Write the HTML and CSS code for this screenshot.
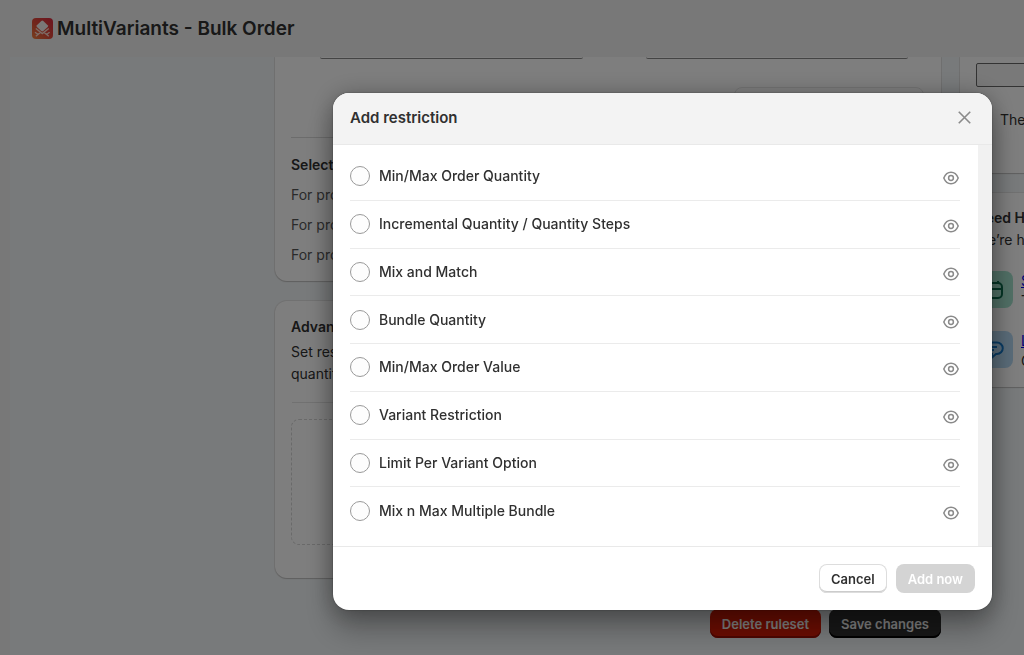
FILE: index.html
```html
<!DOCTYPE html>
<html lang="en">
<head>
<meta charset="utf-8">
<meta name="viewport" content="width=device-width, initial-scale=1">
<title>MultiVariants - Bulk Order</title>
<link rel="stylesheet" href="styles.css">
</head>
<body>
<svg class="sprite" aria-hidden="true">
  <symbol id="eye" viewBox="0 0 16 16">
    <path d="M.8 8C2.300 4.300 4.800 2.300 8 2.300s5.700 2 7.200 5.700c-1.500 3.700-4 5.700-7.200 5.700S2.300 11.700.8 8z"/>
    <circle cx="8" cy="8" r="2.400"/>
  </symbol>
</svg>
<div class="app">
  <header class="topbar">
    <svg class="logo" viewBox="0 0 21 21" aria-hidden="true">
      <defs>
        <linearGradient id="logo-fill" x1="1" y1="0" x2="0" y2="1">
          <stop offset="0" stop-color="#d82840"/>
          <stop offset=".55" stop-color="#e24c38"/>
          <stop offset="1" stop-color="#f0803c"/>
        </linearGradient>
      </defs>
      <rect width="21" height="21" rx="4" fill="url(#logo-fill)"/>
      <path d="M9.300 3q1-.8 2 0l4.400 4.200q.8.9 0 1.800l-4.400 4q-1 .8-2 0L4.900 9q-.8-.9 0-1.800z" fill="#f4f0ee"/>
      <path d="M3.800 10.500l6.500 5 6.500-5M8.500 14.500l-4.700 3.800M12.100 14.500l4.700 3.800M3 14.300l3.500 2.500M17.600 14.300l-3.500 2.500" fill="none" stroke="#fbd6c8" stroke-width="1.400"/>
    </svg>
    <h1 class="app-name">MultiVariants - Bulk Order</h1>
  </header>
  <main class="content">
    <div class="primary">
      <section class="card card-cut">
        <div class="fields"><div class="field-end"></div><div class="field-end"></div></div>
        <div class="preview-box"></div>
        <div class="selection">
          <h2 class="card-title">Selection</h2>
          <p class="muted">For products</p>
          <p class="muted">For products</p>
          <p class="muted">For products</p>
        </div>
      </section>
      <section class="card card-rules">
        <h2 class="card-title">Advanced</h2>
        <p class="card-text">Set restrictions<br>quantity</p>
        <div class="drop-zone"></div>
      </section>
      <div class="page-actions">
        <button class="btn btn-danger" type="button">Delete ruleset</button>
        <button class="btn btn-dark" type="button">Save changes</button>
      </div>
    </div>
    <aside class="secondary">
      <section class="card card-cut card-status">
        <input class="status-input" type="text" aria-label="Status">
        <p class="status-text">The</p>
      </section>
      <section class="card card-help">
        <h2 class="card-title">Need H</h2>
        <p class="card-text">We’re h</p>
        <div class="help-row">
          <span class="tile tile-green"><svg viewBox="0 0 20 20" aria-hidden="true"><rect x="2" y="3" width="16" height="15" rx="4"/><path d="M2 9h16M6 1v2M14 1v2"/></svg></span>
          <div><a href="#">S</a><p>T</p></div>
        </div>
        <div class="help-row">
          <span class="tile tile-blue"><svg viewBox="0 0 20 20" aria-hidden="true"><path d="M6 2.500h7a5 5 0 0 1 0 11.500h-1l-4 3.500V14H6a5 5 0 0 1 0-11.500zM6 7h7M6 10h4"/></svg></span>
          <div><a href="#">L</a><p>G</p></div>
        </div>
      </section>
    </aside>
  </main>
</div>

<div class="backdrop">
  <div class="modal" role="dialog" aria-modal="true" aria-labelledby="modal-title">
    <header class="modal-head">
      <h2 class="modal-title" id="modal-title">Add restriction</h2>
      <button class="icon-btn" type="button" aria-label="Close"><svg class="close" viewBox="0 0 12 12" aria-hidden="true"><path d="M.7.7l10.600 10.600M11.300.7L.7 11.300"/></svg></button>
    </header>
    <div class="modal-body">
      <ul class="options">
        <li class="option"><label class="choice"><input type="radio" name="restriction">Min/Max Order Quantity</label><button class="icon-btn" type="button" aria-label="Preview Min/Max Order Quantity"><svg class="eye"><use href="#eye"/></svg></button></li>
        <li class="option"><label class="choice"><input type="radio" name="restriction">Incremental Quantity / Quantity Steps</label><button class="icon-btn" type="button" aria-label="Preview Incremental Quantity"><svg class="eye"><use href="#eye"/></svg></button></li>
        <li class="option"><label class="choice"><input type="radio" name="restriction">Mix and Match</label><button class="icon-btn" type="button" aria-label="Preview Mix and Match"><svg class="eye"><use href="#eye"/></svg></button></li>
        <li class="option"><label class="choice"><input type="radio" name="restriction">Bundle Quantity</label><button class="icon-btn" type="button" aria-label="Preview Bundle Quantity"><svg class="eye"><use href="#eye"/></svg></button></li>
        <li class="option"><label class="choice"><input type="radio" name="restriction">Min/Max Order Value</label><button class="icon-btn" type="button" aria-label="Preview Min/Max Order Value"><svg class="eye"><use href="#eye"/></svg></button></li>
        <li class="option"><label class="choice"><input type="radio" name="restriction">Variant Restriction</label><button class="icon-btn" type="button" aria-label="Preview Variant Restriction"><svg class="eye"><use href="#eye"/></svg></button></li>
        <li class="option"><label class="choice"><input type="radio" name="restriction">Limit Per Variant Option</label><button class="icon-btn" type="button" aria-label="Preview Limit Per Variant Option"><svg class="eye"><use href="#eye"/></svg></button></li>
        <li class="option"><label class="choice"><input type="radio" name="restriction">Mix n Max Multiple Bundle</label><button class="icon-btn" type="button" aria-label="Preview Mix n Max Multiple Bundle"><svg class="eye"><use href="#eye"/></svg></button></li>
      </ul>
      <div class="scroll-track"></div>
    </div>
    <footer class="modal-foot">
      <button class="btn btn-plain" type="button">Cancel</button>
      <button class="btn btn-primary" type="button" disabled>Add now</button>
    </footer>
  </div>
</div>
</body>
</html>
```
FILE: styles.css
```css
* { box-sizing: border-box; }
body {
  margin: 0;
  font-family: Inter, "Liberation Sans", sans-serif;
  font-size: 14px;
  line-height: 20px;
  color: #303030;
  background: #f0f0f0;
}
h1, h2, p, ul { margin: 0; padding: 0; }
button, input { font: inherit; }
.sprite { display: none; }

.app {
  height: 100vh;
  padding-left: 10px;
  display: flex;
  flex-direction: column;
  overflow: hidden;
}
.topbar {
  flex: none;
  display: flex;
  align-items: center;
  gap: 4px;
  height: 57px;
  padding: 0 22px;
}
.logo { width: 21px; height: 21px; }
.app-name { font-size: 19px; font-weight: 600; line-height: 24px; }

.content {
  flex: 1;
  min-height: 0;
  display: grid;
  grid-template-columns: 666px 320px;
  gap: 19px;
  padding-left: 265px;
  background: #f0f4f6;
  overflow: hidden;
}
.card {
  border-radius: 12px;
  background: #fdfdfd;
  box-shadow: 0 1px 1px #c0c0c0, 0 0 0 1px #e2e2e2;
  overflow: hidden;
}
.card-cut { border-radius: 0 0 12px 12px; }
.card-title { font-size: 14px; font-weight: 600; line-height: 20px; }
.primary, .secondary { display: flex; flex-direction: column; gap: 20px; }
.primary .card { padding: 0 16px; }
.fields { display: flex; gap: 63px; padding: 0 17px 0 29px; }
.field-end { flex: 1; height: 2px; border-bottom: 1px solid #888; border-radius: 0 0 8px 8px; }
.preview-box {
  width: 190px;
  height: 50px;
  margin: 28px 0 0 443px;
  border: 1px solid #e4e4e4;
  border-radius: 8px;
}
.selection {
  display: flex;
  flex-direction: column;
  gap: 10px;
  border-top: 1px solid #d8d8d8;
  padding: 17px 0 16px;
}
.muted { color: #555; }
.card-rules .card-title { padding-top: 14px; line-height: 24px; }
.card-text { line-height: 22px; }
.card-rules .card-text { padding-top: 2px; }
.drop-zone {
  position: relative;
  height: 126px;
  margin-top: 34px;
  border: 1px dashed #d4d4d4;
  border-radius: 8px;
}
.drop-zone::before {
  content: "";
  position: absolute;
  top: -18px;
  left: 0;
  right: 0;
  border-top: 1px solid #e2e2e2;
}
.primary .card-rules { padding-bottom: 33px; }
.page-actions { display: flex; justify-content: flex-end; gap: 8px; margin-top: 11px; }

.card-status { height: 116px; padding: 6px 16px 0; }
.status-input { display: block; width: 100%; height: 24px; border: 1px solid #666; border-radius: 2px; background: #f3f3f3; }
.status-text { padding: 23px 0 0 24px; }
.card-help { padding: 15px 15px 16px; }
.card-help .card-text { padding-top: 1px; }
.help-row { display: flex; gap: 8px; margin-top: 20px; }
.help-row a { color: #0000ee; }
.tile {
  width: 38px;
  height: 37px;
  display: grid;
  place-items: center;
  border-radius: 8px;
}
.tile svg { width: 20px; height: 20px; fill: none; stroke: currentColor; stroke-width: 2; }
.tile-green { background: #a2e0cc; color: #0b6b4d; }
.tile-blue { background: #b4d8f2; color: #1478c8; }

.btn {
  height: 29px;
  padding: 0 12px;
  border: 0;
  border-radius: 8px;
  font-size: 13px;
  font-weight: 600;
}
.btn-danger { background: #d91a04; color: #fff; box-shadow: inset 0 -2px 0 #9c0c00; }
.btn-dark { background: #303030; color: #fff; box-shadow: inset 0 -2px 0 #000; }
.btn-plain {
  background: #fff;
  color: #303030;
  box-shadow: inset 0 0 0 1px #ddd, inset 0 -2px 0 #ccc;
}
.btn-primary { background: #d4d4d4; color: #fff; }

.backdrop {
  position: fixed;
  inset: 0;
  display: flex;
  justify-content: flex-end;
  align-items: flex-start;
  padding: 93px 32px 0;
  background: rgba(0, 0, 0, .5);
}
.modal {
  width: 100%;
  max-width: 659px;
  border-radius: 16px;
  background: #fff;
  overflow: hidden;
  box-shadow: 0 20px 30px rgba(0, 0, 0, .26), 0 2px 24px rgba(0, 0, 0, .3), 0 0 2px rgba(0, 0, 0, .4);
}
.modal-head {
  display: flex;
  justify-content: space-between;
  align-items: center;
  height: 52px;
  padding: 0 21px 2px 17px;
  background: #f3f3f3;
  border-bottom: 1px solid #e9e9e9;
}
.modal-title { font-size: 15px; font-weight: 600; }
.icon-btn { display: flex; padding: 0; border: 0; background: none; color: #8a8a8a; }
.icon-btn svg { fill: none; stroke: currentColor; }
.close { width: 13px; height: 13px; stroke-width: 1.500; }
.eye { width: 16px; height: 16px; stroke-width: 1.500; }
.modal-body { display: flex; border-bottom: 1px solid #e9e9e9; }
.options {
  flex: 1;
  display: grid;
  grid-auto-rows: 1fr;
  height: 401px;
  padding: 8px 18px 11px 17px;
  list-style: none;
}
.option { display: flex; justify-content: space-between; align-items: center; border-bottom: 1px solid #ebebeb; }
.option:last-child { border-bottom: 0; }
.option .icon-btn { padding: 4px 1px 0 0; }
.choice { display: flex; align-items: center; gap: 9px; font-weight: 450; }
.choice input {
  appearance: none;
  width: 20px;
  height: 20px;
  margin: 0;
  border: 1px solid #999;
  border-radius: 50%;
  background: #fdfdfd;
}
.scroll-track { width: 14px; background: #f1f1f1; }
.modal-foot { display: flex; justify-content: flex-end; gap: 9px; padding: 17px; }
```
